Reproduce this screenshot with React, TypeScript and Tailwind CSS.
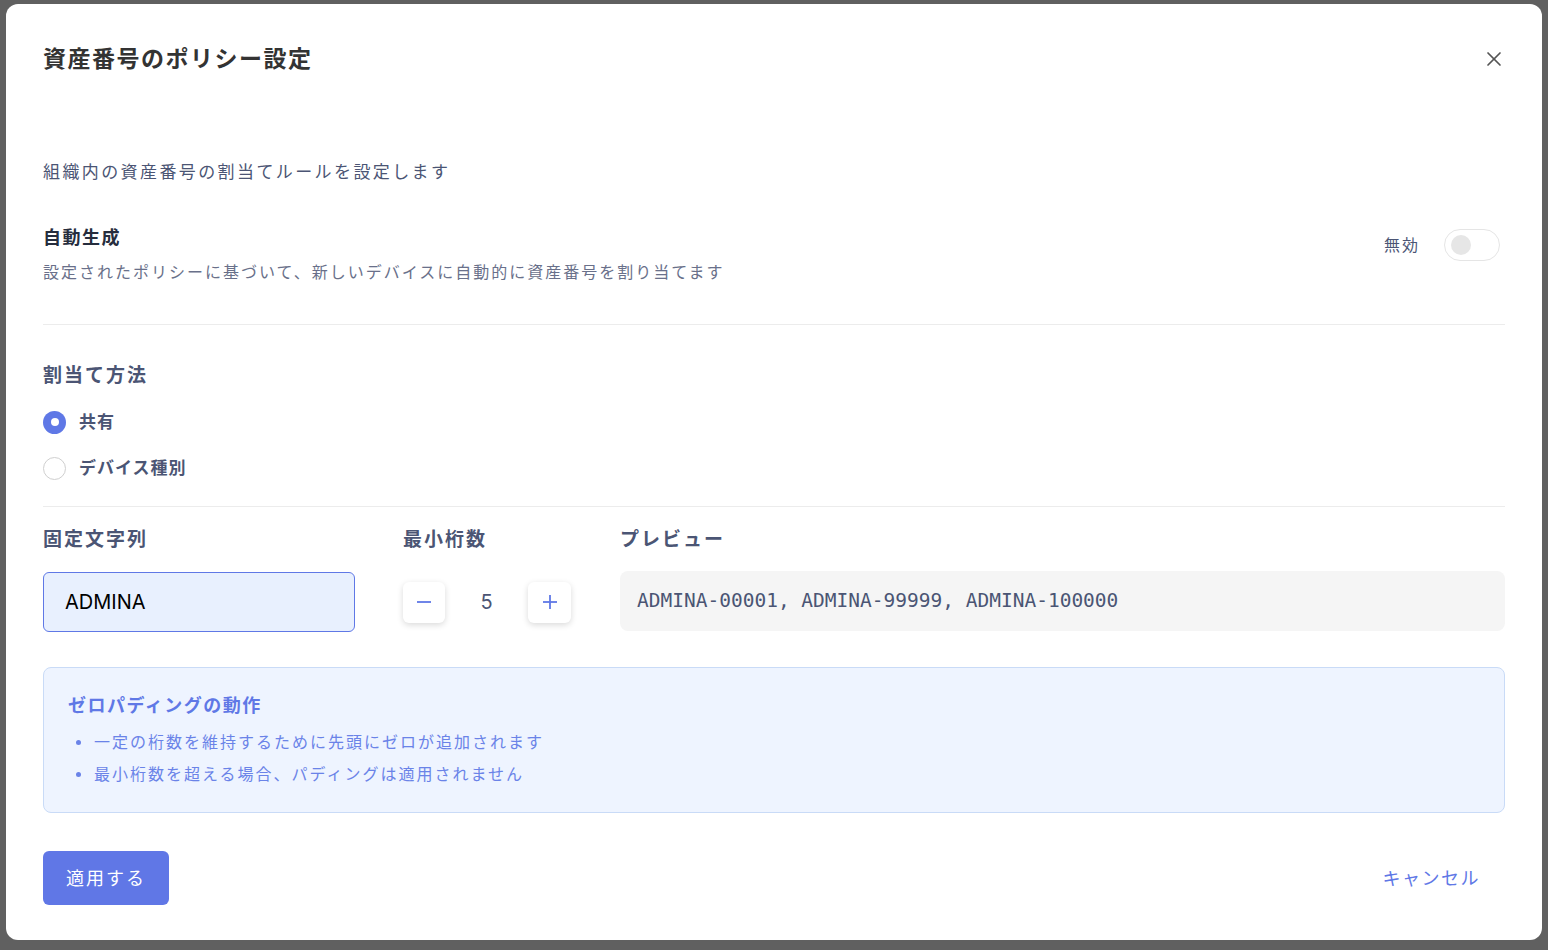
import React, { useState } from 'react'

const jp = "font-['Inter','Noto_Sans_CJK_JP',sans-serif]"

const Radio = ({ checked, label, onClick }: { checked: boolean; label: string; onClick: () => void }) => (
    <button type="button" onClick={onClick} className="flex items-center gap-[13px] h-6">
        {checked ? (
            <span className="w-[23px] h-[23px] rounded-full bg-[#5f78e6] flex items-center justify-center">
                <span className="w-2 h-2 rounded-full bg-white" />
            </span>
        ) : (
            <span className="w-[23px] h-[23px] rounded-full border border-[#cfcfcf] bg-white" />
        )}
        <span className="text-[17px] font-bold text-[#4b5574] leading-6 tracking-[1px]">{label}</span>
    </button>
)

export default function App() {
    const [method, setMethod] = useState<'shared' | 'device'>('shared')
    const [digits, setDigits] = useState(5)
    const [prefix, setPrefix] = useState('ADMINA')
    const [enabled, setEnabled] = useState(false)

    const pad = (n: number) => String(n).padStart(digits, '0')
    const preview = `${prefix}-${pad(1)}, ${prefix}-${'9'.repeat(digits)}, ${prefix}-1${'0'.repeat(digits)}`

    return (
        <div className={`w-full h-[950px] bg-[#606060] pt-1 px-[6px] ${jp}`}>
            <div className="bg-white rounded-xl h-[936px] px-[37px] pt-10">
                {/* Header */}
                <div className="flex items-center justify-between h-[30px]">
                    <h1 className="text-[23px] leading-[30px] font-bold text-[#333333] tracking-[1.5px]">資産番号のポリシー設定</h1>
                    <button type="button" className="mr-[3px] text-[#555]">
                        <svg width="16" height="16" viewBox="0 0 16 16" fill="none" stroke="currentColor" strokeWidth="1.7" strokeLinecap="round">
                            <line x1="2" y1="2" x2="14" y2="14" />
                            <line x1="14" y1="2" x2="2" y2="14" />
                        </svg>
                    </button>
                </div>

                <p className="mt-[86px] text-[17px] leading-6 text-[#4b5574] tracking-[2.4px]">組織内の資産番号の割当てルールを設定します</p>

                {/* Auto generate */}
                <div className="mt-[41px] flex justify-between border-b border-[#ececec] pb-10">
                    <div>
                        <div className="text-[18px] leading-[26px] font-bold text-[#262d3d] tracking-[1.5px]">自動生成</div>
                        <div className="mt-[9px] text-[16px] leading-6 text-[#69708a] tracking-[2px]">設定されたポリシーに基づいて、新しいデバイスに自動的に資産番号を割り当てます</div>
                    </div>
                    <div className="flex items-start gap-6 pt-1 mr-[5px]">
                        <span className="text-[16px] leading-[32px] text-[#4b5574] tracking-[2px]">{enabled ? '有効' : '無効'}</span>
                        <button
                            type="button"
                            onClick={() => setEnabled(!enabled)}
                            className="w-14 h-8 rounded-full border border-[#e5e5e5] bg-white flex items-center px-[6px]"
                        >
                            <span className="w-5 h-5 rounded-full bg-[#e6e6e6]" />
                        </button>
                    </div>
                </div>

                {/* Method */}
                <div className="border-b border-[#ececec] pb-[26px]">
                    <div className="mt-[37px] text-[19px] leading-7 font-bold text-[#4b5574] tracking-[2px]">割当て方法</div>
                    <div className="mt-5 flex flex-col gap-[22px]">
                        <Radio checked={method === 'shared'} label="共有" onClick={() => setMethod('shared')} />
                        <Radio checked={method === 'device'} label="デバイス種別" onClick={() => setMethod('device')} />
                    </div>
                </div>

                {/* Fields */}
                <div className="mt-[19px] flex">
                    <div className="w-[360px]">
                        <div className="text-[19px] leading-7 font-bold text-[#4b5574] tracking-[2px]">固定文字列</div>
                        <input
                            value={prefix}
                            onChange={(e) => setPrefix(e.target.value)}
                            className="mt-[18px] w-[312px] h-[60px] rounded-md border border-[#5f78e6] bg-[#e8f0fe] px-[21px] text-[20px] text-black outline-none font-['Inter',sans-serif]"
                        />
                    </div>
                    <div className="w-[217px]">
                        <div className="text-[19px] leading-7 font-bold text-[#4b5574] tracking-[2px]">最小桁数</div>
                        <div className="mt-[18px] h-[60px] flex items-center">
                            <button
                                type="button"
                                onClick={() => setDigits(Math.max(1, digits - 1))}
                                className="w-[42px] h-[41px] rounded-md bg-white shadow-[0_2px_6px_rgba(0,0,0,0.15)] flex items-center justify-center text-[#5f78e6]"
                            >
                                <svg width="16" height="16" viewBox="0 0 16 16" stroke="currentColor" strokeWidth="1.8"><line x1="1" y1="8" x2="15" y2="8" /></svg>
                            </button>
                            <span className="w-[83px] text-center text-[20px] text-[#4b5574] font-['Inter',sans-serif]">{digits}</span>
                            <button
                                type="button"
                                onClick={() => setDigits(digits + 1)}
                                className="w-[43px] h-[41px] rounded-md bg-white shadow-[0_2px_6px_rgba(0,0,0,0.15)] flex items-center justify-center text-[#5f78e6]"
                            >
                                <svg width="16" height="16" viewBox="0 0 16 16" stroke="currentColor" strokeWidth="1.8"><line x1="1" y1="8" x2="15" y2="8" /><line x1="8" y1="1" x2="8" y2="15" /></svg>
                            </button>
                        </div>
                    </div>
                    <div className="flex-1">
                        <div className="text-[19px] leading-7 font-bold text-[#4b5574] tracking-[2px]">プレビュー</div>
                        <div className="mt-[17px] h-[60px] rounded-lg bg-[#f5f5f5] flex items-center px-[17px] text-[19.5px] text-[#4b5574] font-['DejaVu_Sans_Mono',monospace]">
                            {preview}
                        </div>
                    </div>
                </div>

                {/* Info */}
                <div className="mt-[35px] h-[146px] rounded-lg border border-[#c9dbf7] bg-[#eef4ff] px-6 pt-[25px]">
                    <div className="text-[18px] leading-[26px] font-bold text-[#5f78e6] tracking-[1.5px]">ゼロパディングの動作</div>
                    <ul className="mt-[7px] text-[16px] leading-8 text-[#6a83e8] tracking-[2px]">
                        <li className="flex items-center gap-[13px]"><span className="ml-[8px] w-[5px] h-[5px] rounded-full bg-[#6a83e8]" />一定の桁数を維持するために先頭にゼロが追加されます</li>
                        <li className="flex items-center gap-[13px]"><span className="ml-[8px] w-[5px] h-[5px] rounded-full bg-[#6a83e8]" />最小桁数を超える場合、パディングは適用されません</li>
                    </ul>
                </div>

                {/* Footer */}
                <div className="mt-[38px] flex items-center justify-between">
                    <button type="button" className="w-[126px] h-[54px] rounded-md bg-[#6077e6] text-white text-[18px] tracking-[2px]">適用する</button>
                    <button type="button" className="mr-[25px] text-[18px] text-[#5f78e6] tracking-[1.5px]">キャンセル</button>
                </div>
            </div>
        </div>
    )
}
